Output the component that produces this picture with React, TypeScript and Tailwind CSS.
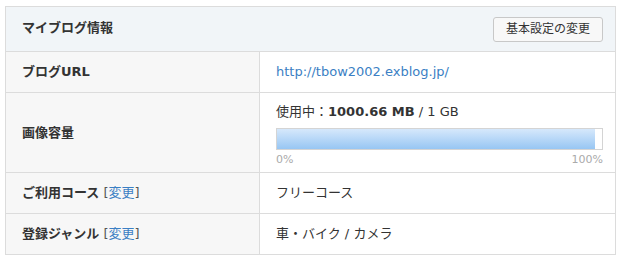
const font = { fontFamily: '"DejaVu Sans", "Noto Sans CJK JP", sans-serif' };

function ChangeLink() {
  return (
    <span className="font-normal text-[#555]">
      {' '}[<a href="#" className="text-[#3b7fc4]">変更</a>]
    </span>
  );
}

export default function App() {
  const usedPercent = 97.7;

  return (
    <div className="bg-white w-[623px] h-[262px] pt-[6px] pl-[5px]" style={font}>
      <table className="w-[611px] border-collapse text-[13px] text-[#333]">
        <tbody>
          <tr className="h-[45px] bg-[#f1f5f8]">
            <td colSpan={2} className="border border-[#dcdcdc] px-4 pb-[3px]">
              <div className="flex items-center justify-between">
                <span className="font-bold">マイブログ情報</span>
                <button className="w-[110px] h-[25px] rounded-[3px] border border-[#c8c8c8] bg-[#f8f8f8] text-[12px] text-[#333] mr-[-4px] mt-[3px]">
                  基本設定の変更
                </button>
              </div>
            </td>
          </tr>
          <tr className="h-[41px]">
            <td className="w-[254px] border border-[#dcdcdc] bg-[#f7f7f7] px-4 font-bold">ブログURL</td>
            <td className="border border-[#dcdcdc] px-4">
              <a href="#" className="text-[#3b7fc4]">http://tbow2002.exblog.jp/</a>
            </td>
          </tr>
          <tr className="h-[80px]">
            <td className="border border-[#dcdcdc] bg-[#f7f7f7] px-4 font-bold">画像容量</td>
            <td className="border border-[#dcdcdc] px-4 pr-[12px] pt-[5px]">
              <div className="leading-[18px]">
                使用中：<span className="font-bold">1000.66 MB</span> / 1 GB
              </div>
              <div className="mt-[7px] h-[22px] border border-[#d4d4d4] bg-white">
                <div
                  className="h-full bg-gradient-to-b from-[#d6e8fb] to-[#97c6f3]"
                  style={{ width: `${usedPercent}%` }}
                />
              </div>
              <div className="mt-[3px] flex justify-between text-[11px] leading-[14px] text-[#aaa]">
                <span>0%</span>
                <span>100%</span>
              </div>
            </td>
          </tr>
          <tr className="h-[41px]">
            <td className="border border-[#dcdcdc] bg-[#f7f7f7] px-4 font-bold">
              ご利用コース<ChangeLink />
            </td>
            <td className="border border-[#dcdcdc] px-4">フリーコース</td>
          </tr>
          <tr className="h-[41px]">
            <td className="border border-[#dcdcdc] bg-[#f7f7f7] px-4 font-bold">
              登録ジャンル<ChangeLink />
            </td>
            <td className="border border-[#dcdcdc] px-4">車・バイク / カメラ</td>
          </tr>
        </tbody>
      </table>
    </div>
  );
}
